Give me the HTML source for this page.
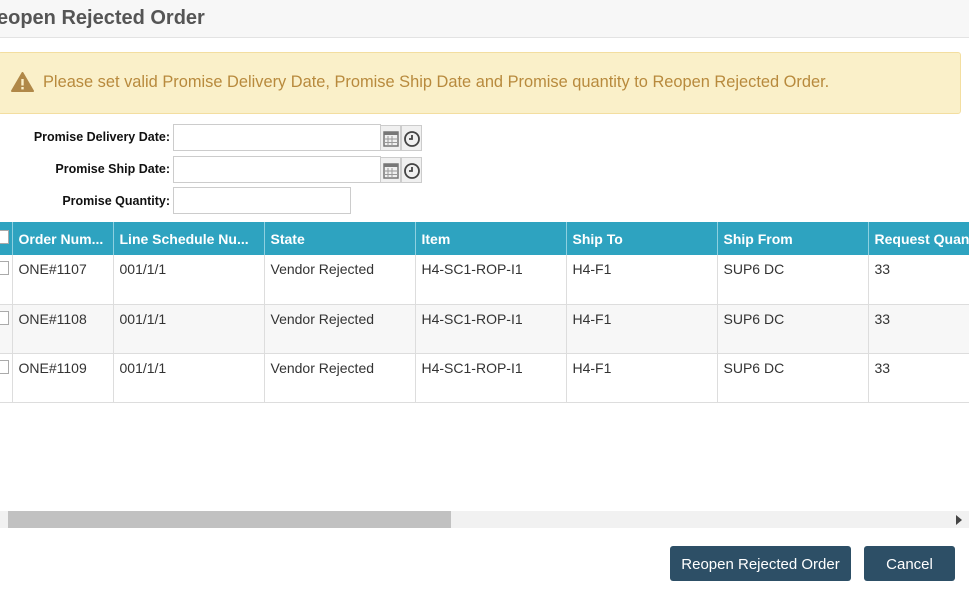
<!DOCTYPE html>
<html><head><style>
*{box-sizing:border-box;margin:0;padding:0}
body{width:969px;height:595px;overflow:hidden;background:#fff;font-family:"Liberation Sans",sans-serif;position:relative;color:#333}
.hdr{position:absolute;left:0;top:0;width:969px;height:38px;background:#f7f7f7;border-bottom:1px solid #e3e3e3}
.hdr span{position:absolute;left:-3px;top:7px;font-size:20px;font-weight:bold;color:#555}
.alert{position:absolute;left:-2px;top:52px;width:963px;height:62px;background:#faf0c9;border:1px solid #f3dea0;border-radius:3px}
.alert span{position:absolute;left:44px;top:20px;font-size:16.4px;color:#b88a3d}
.lbl{position:absolute;font-size:12.5px;font-weight:bold;color:#111;text-align:right;width:170px;left:0}
.inp{position:absolute;left:173px;height:27px;border:1px solid #ccc;background:#fff}
.ic{position:absolute;width:21px;height:26px;background:#f0f0f0;border:1px solid #ccc}
table{position:absolute;left:-1px;top:222px;border-collapse:collapse;font-size:14px;table-layout:fixed;width:990px}
th{background:#2ea3c0;color:#fff;text-align:left;height:33px;padding:0 6px;border-left:1px solid #8ed0e0;font-size:14px;overflow:hidden;white-space:nowrap}
td{height:49px;vertical-align:top;padding:6px 6px 0;border-left:1px solid #ddd;border-bottom:1px solid #ddd;color:#333;white-space:nowrap;overflow:hidden}
tr.g td{background:#f7f7f7}
.cb{display:inline-block;width:10px;height:14px;border:1px solid #aaa;background:#fff;border-left:none}
.sb{position:absolute;left:0;top:511px;width:969px;height:17px;background:#f1f1f1}
.th{position:absolute;left:8px;top:0;width:443px;height:17px;background:#c1c1c1}
.btn{position:absolute;top:546px;height:35px;background:#2d4f66;color:#fff;border-radius:3px;font-size:15px;text-align:center;line-height:37px}
</style></head><body>
<div class="hdr"><span>eopen Rejected Order</span></div>
<div class="alert"><svg style="position:absolute;left:12px;top:19px" width="23" height="20" viewBox="0 0 23 20"><path d="M11.5 1 L22 19 L1 19 Z" fill="#b08848" stroke="#b08848" stroke-linejoin="round" stroke-width="2"/><rect x="10.3" y="7" width="2.4" height="6.5" fill="#faf0c9"/><rect x="10.3" y="15" width="2.4" height="2.4" fill="#faf0c9"/></svg><span>Please set valid Promise Delivery Date, Promise Ship Date and Promise quantity to Reopen Rejected Order.</span></div>
<div class="lbl" style="top:130px">Promise Delivery Date:</div>
<div class="inp" style="top:124px;width:208px"></div>
<div class="ic" style="left:380px;top:125px"></div><div class="ic" style="left:401px;top:125px"></div>
<div class="lbl" style="top:162px">Promise Ship Date:</div>
<div class="inp" style="top:156px;width:208px"></div>
<div class="ic" style="left:380px;top:157px"></div><div class="ic" style="left:401px;top:157px"></div>
<svg style="position:absolute;left:383px;top:129px" width="40" height="52">
<g fill="#777"><rect x="1" y="3" width="14" height="14" fill="none" stroke="#777" stroke-width="1.5"/><rect x="1" y="3" width="14" height="3"/><path d="M5 7v10M9 7v10M1 10h14M1 13.5h14" stroke="#999"/><rect x="1" y="35" width="14" height="14" fill="none" stroke="#777" stroke-width="1.5"/><rect x="1" y="35" width="14" height="3"/><path d="M5 39v10M9 39v10M1 42h14M1 45.5h14" stroke="#999"/></g>
<g fill="none" stroke="#444" stroke-width="1.8"><circle cx="29" cy="10" r="7"/><path d="M29 6v4h-3"/><circle cx="29" cy="42" r="7"/><path d="M29 38v4h-3"/></g></svg>
<div class="lbl" style="top:194px">Promise Quantity:</div>
<div class="inp" style="top:187px;width:178px"></div>
<table>
<colgroup><col style="width:13px"><col style="width:101px"><col style="width:151px"><col style="width:151px"><col style="width:151px"><col style="width:151px"><col style="width:151px"><col style="width:121px"></colgroup>
<tr><th style="padding:0;border-left:none"><span class="cb" style="background:#fff;margin-top:-8px"></span></th><th>Order Num...</th><th>Line Schedule Nu...</th><th>State</th><th>Item</th><th>Ship To</th><th>Ship From</th><th>Request Quan</th></tr>
<tr><td style="padding:6px 0 0;border-left:none"><span class="cb"></span></td><td>ONE#1107</td><td>001/1/1</td><td>Vendor Rejected</td><td>H4-SC1-ROP-I1</td><td>H4-F1</td><td>SUP6 DC</td><td>33</td></tr>
<tr class="g"><td style="padding:6px 0 0;border-left:none"><span class="cb"></span></td><td>ONE#1108</td><td>001/1/1</td><td>Vendor Rejected</td><td>H4-SC1-ROP-I1</td><td>H4-F1</td><td>SUP6 DC</td><td>33</td></tr>
<tr><td style="padding:6px 0 0;border-left:none"><span class="cb"></span></td><td>ONE#1109</td><td>001/1/1</td><td>Vendor Rejected</td><td>H4-SC1-ROP-I1</td><td>H4-F1</td><td>SUP6 DC</td><td>33</td></tr>
</table>
<div class="sb"><div class="th"></div><svg style="position:absolute;left:956px;top:4px" width="6" height="10"><path d="M0 0L6 5L0 10Z" fill="#444"/></svg></div>
<div class="btn" style="left:670px;width:181px">Reopen Rejected Order</div>
<div class="btn" style="left:864px;width:91px">Cancel</div>
</body></html>
